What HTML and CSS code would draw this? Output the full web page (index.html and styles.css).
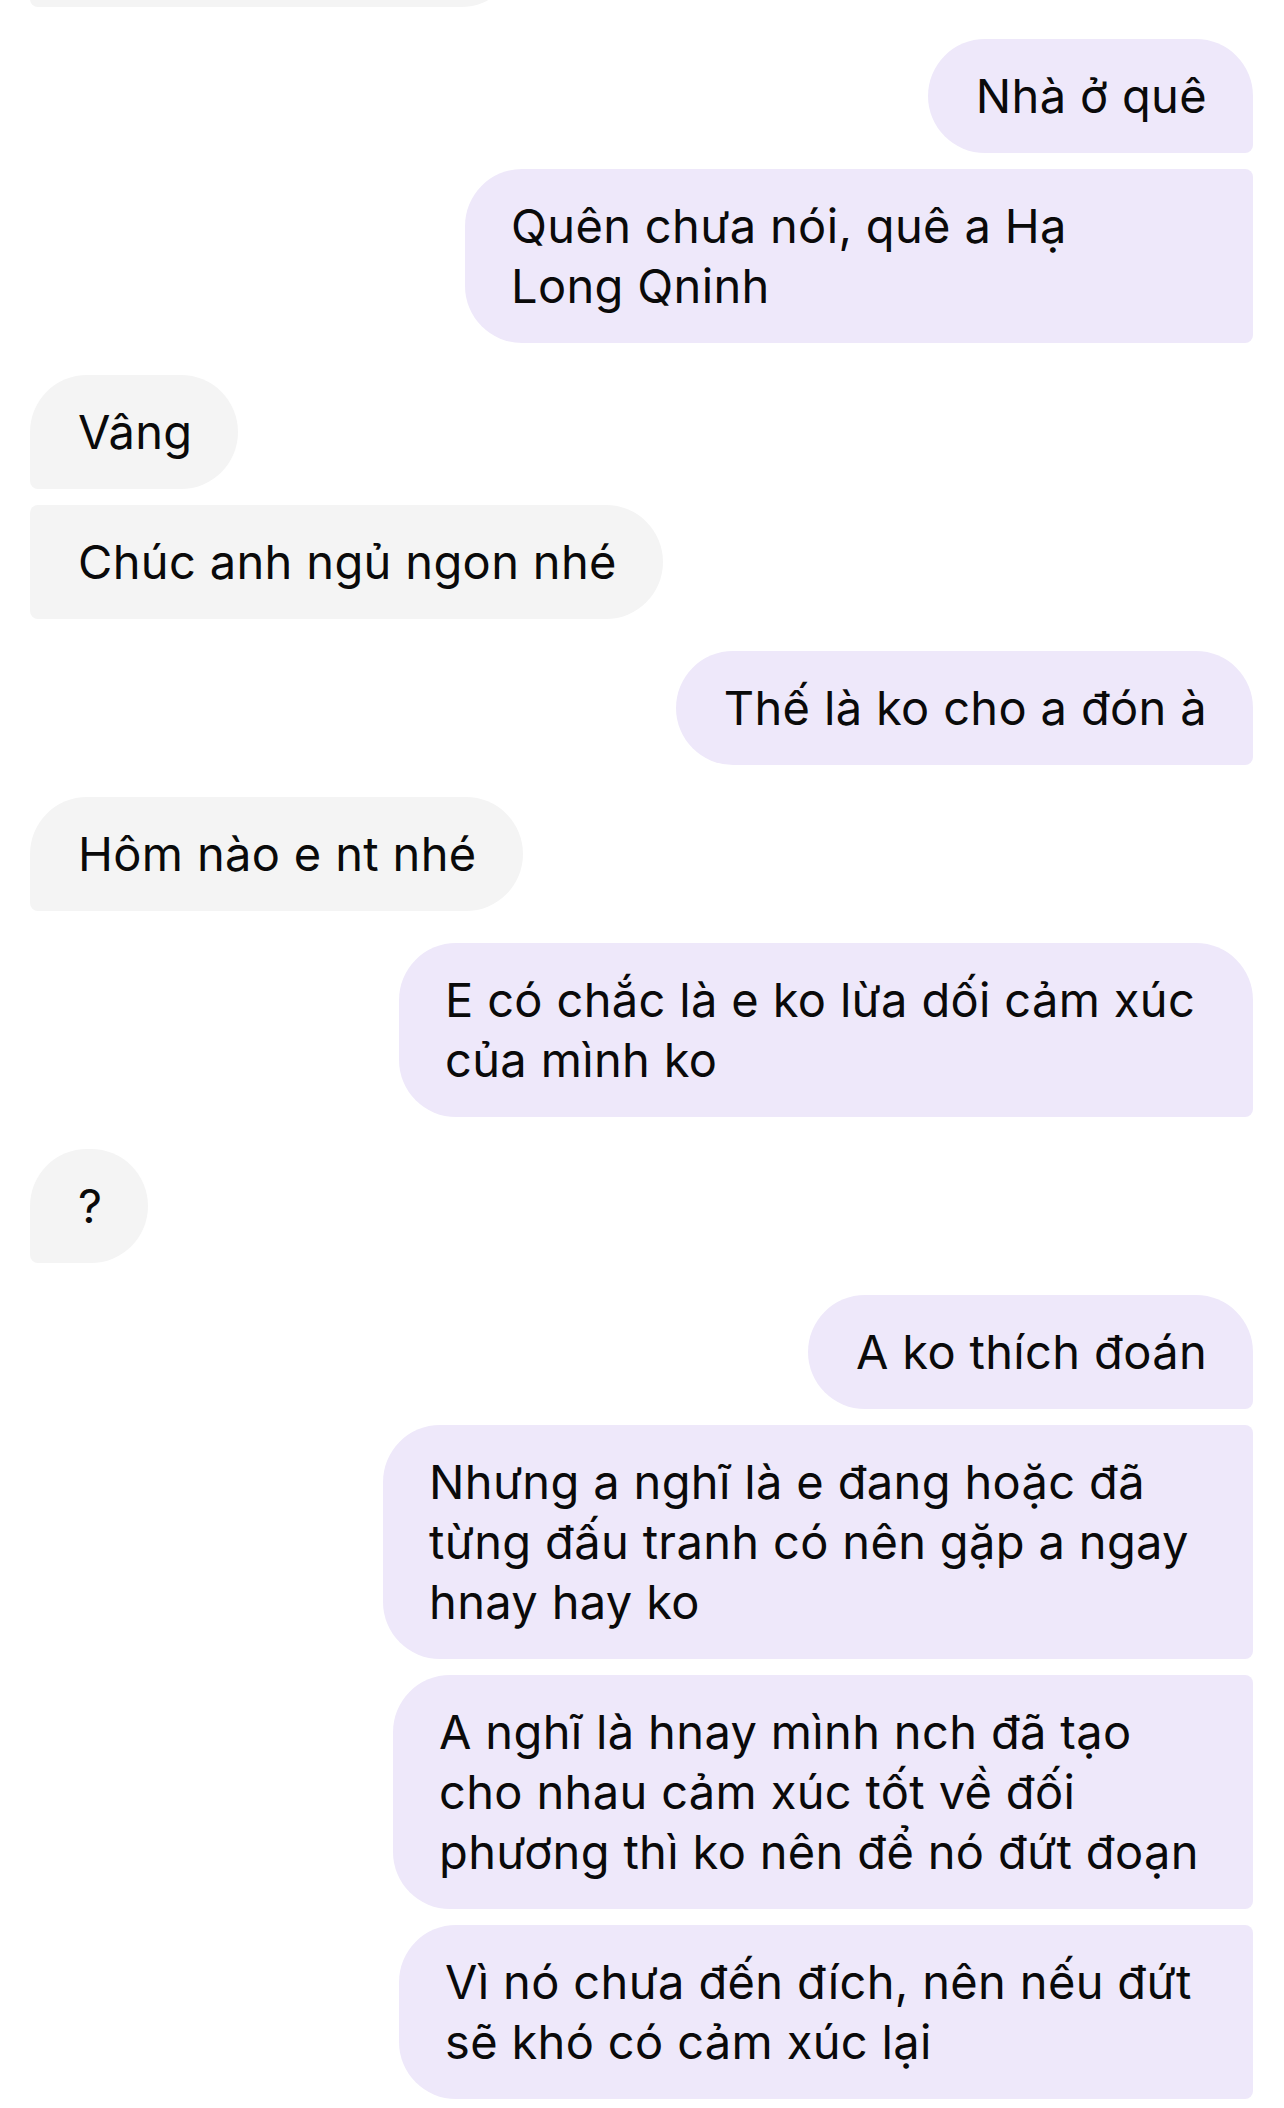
FILE: index.html
```html
<!DOCTYPE html>
<html lang="vi">
<head>
    <meta charset="UTF-8">
    <meta name="viewport" content="width=device-width, initial-scale=1.0">
    <title>Tin nhắn</title>
    <link rel="stylesheet" href="styles.css">
</head>
<body>
    <div class="thread">
        <div class="msg in cut"></div>

        <div class="msg out first">Nhà ở quê</div>
        <div class="msg out mid">Quên chưa nói, quê a Hạ<br>Long Qninh</div>

        <div class="msg in first">Vâng</div>
        <div class="msg in">Chúc anh ngủ ngon nhé</div>

        <div class="msg out first">Thế là ko cho a đón à</div>

        <div class="msg in first">Hôm nào e nt nhé</div>

        <div class="msg out first wide">E có chắc là e ko lừa dối cảm xúc<br>của mình ko</div>

        <div class="msg in first">?</div>

        <div class="msg out first">A ko thích đoán</div>
        <div class="msg out wide widest">Nhưng a nghĩ là e đang hoặc đã<br>từng đấu tranh có nên gặp a ngay<br>hnay hay ko</div>
        <div class="msg out wide wider">A nghĩ là hnay mình nch đã tạo<br>cho nhau cảm xúc tốt về đối<br>phương thì ko nên để nó đứt đoạn</div>
        <div class="msg out wide">Vì nó chưa đến đích, nên nếu đứt<br>sẽ khó có cảm xúc lại</div>
    </div>
</body>
</html>
```

FILE: styles.css
```css
body {
    margin: 0;
    padding: 0;
    background-color: #fff;
    font-family: 'Inter', 'Noto Sans', sans-serif;
    color: #0a0a0a;
}

.thread {
    display: flex;
    flex-direction: column;
    margin-top: -107px;
    padding: 0 31px 0 30px;
}

.msg {
    box-sizing: border-box;
    min-height: 114px;
    padding: 27px 46px 27px 48px;
    font-size: 47px;
    line-height: 60px;
    letter-spacing: 0.35px;
    white-space: nowrap;
    margin-top: 16px;
}

.msg.first {
    margin-top: 32px;
}

.in {
    align-self: flex-start;
    background-color: #f4f4f4;
    border-radius: 8px 57px 57px 8px;
}

.in.first {
    border-top-left-radius: 57px;
}

.out {
    align-self: flex-end;
    background-color: #eee8fa;
    border-radius: 57px 8px 8px 57px;
}

.out.first {
    border-top-right-radius: 57px;
}

.wide {
    min-width: 854px;
    padding-left: 46px;
}

.wider {
    min-width: 860px;
}

.widest {
    min-width: 870px;
}

.mid {
    width: 788px;
    padding-left: 46px;
}

.cut {
    width: 488px;
    margin-top: 0;
}
```
